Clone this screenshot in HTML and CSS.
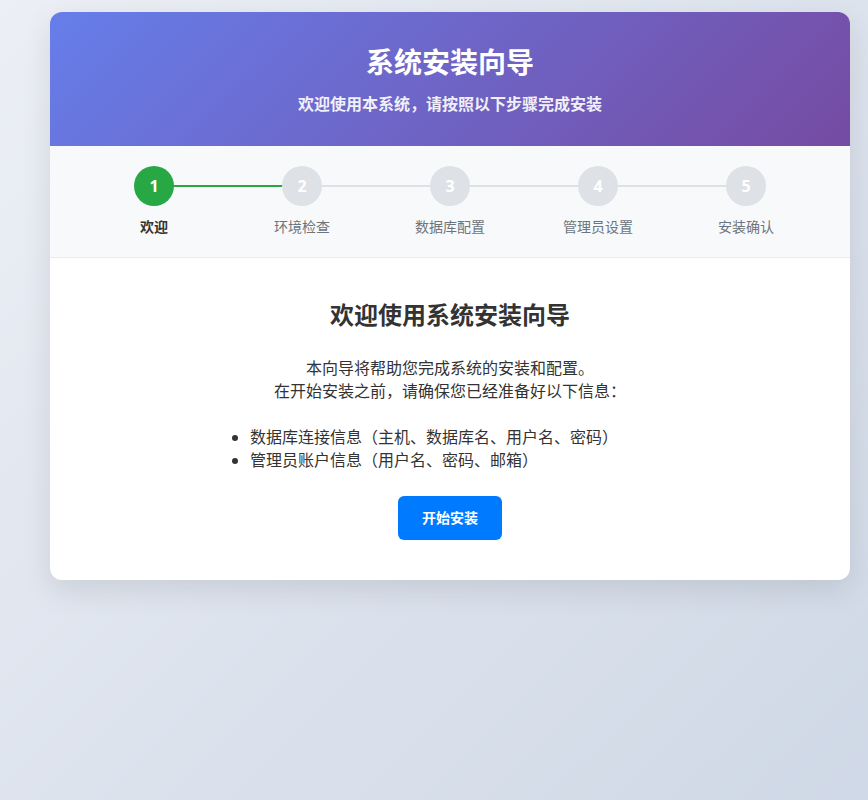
FILE: index.html
```html
<!DOCTYPE html>
<html lang="zh-CN">

<head>
  <meta charset="UTF-8">
  <title>系统安装向导</title>
  <link rel="stylesheet" href="styles.css">
</head>

<body>
  <div class="wizard">
    <div class="wizard-header">
      <h1>系统安装向导</h1>
      <p>欢迎使用本系统，请按照以下步骤完成安装</p>
    </div>

    <div class="steps">
      <div class="step active">
        <div class="step-circle">1</div>
        <div class="step-label">欢迎</div>
      </div>
      <div class="step">
        <div class="step-circle">2</div>
        <div class="step-label">环境检查</div>
      </div>
      <div class="step">
        <div class="step-circle">3</div>
        <div class="step-label">数据库配置</div>
      </div>
      <div class="step">
        <div class="step-circle">4</div>
        <div class="step-label">管理员设置</div>
      </div>
      <div class="step">
        <div class="step-circle">5</div>
        <div class="step-label">安装确认</div>
      </div>
    </div>

    <div class="wizard-content">
      <h2>欢迎使用系统安装向导</h2>
      <p>本向导将帮助您完成系统的安装和配置。<br>在开始安装之前，请确保您已经准备好以下信息：</p>
      <ul class="info-list">
        <li>数据库连接信息（主机、数据库名、用户名、密码）</li>
        <li>管理员账户信息（用户名、密码、邮箱）</li>
      </ul>
      <div class="actions">
        <button type="button" class="btn-primary">开始安装</button>
      </div>
    </div>
  </div>
</body>

</html>
```

FILE: styles.css
```css
* {
  box-sizing: border-box;
}

body {
  margin: 0;
  padding: 12px 50px;
  min-height: 100vh;
  font-family: "Noto Sans", "Noto Sans CJK SC", sans-serif;
  color: #333;
  background: linear-gradient(135deg, #eceff5 0%, #cfd8e6 100%);
}

.wizard {
  width: 800px;
  background: #fff;
  border-radius: 12px;
  box-shadow: 0 10px 30px rgba(0, 0, 0, 0.1);
  overflow: hidden;
}

.wizard-header {
  padding: 30px;
  text-align: center;
  color: #fff;
  background: linear-gradient(135deg, #667eea 0%, #764ba2 100%);
}

.wizard-header h1 {
  margin: 0 0 10px;
  font-size: 28px;
  line-height: 40px;
}

.wizard-header p {
  margin: 0;
  font-size: 16px;
  font-weight: bold;
  line-height: 24px;
  opacity: 0.9;
}

/* 步骤条 */
.steps {
  display: flex;
  padding: 20px 30px;
  background: #f8f9fa;
  border-bottom: 1px solid #e9ecef;
}

.step {
  flex: 1;
  position: relative;
  display: flex;
  flex-direction: column;
  align-items: center;
}

.step:not(:last-child)::after {
  content: "";
  position: absolute;
  top: 19px;
  left: 50%;
  width: 100%;
  height: 2px;
  background: #dee2e6;
}

.step.active::after {
  background: #28a745 !important;
}

.step-circle {
  position: relative;
  z-index: 1;
  width: 40px;
  height: 40px;
  border-radius: 50%;
  background: #dee2e6;
  color: #fff;
  font-size: 16px;
  font-weight: bold;
  display: flex;
  align-items: center;
  justify-content: center;
}

.step.active .step-circle {
  background: #28a745;
}

.step-label {
  margin-top: 11px;
  font-size: 14px;
  line-height: 20px;
  color: #6c757d;
}

.step.active .step-label {
  color: #333;
  font-weight: bold;
}

/* 内容 */
.wizard-content {
  padding: 40px;
  text-align: center;
}

.wizard-content h2 {
  margin: 0 0 25px;
  font-size: 24px;
  line-height: 34px;
}

.wizard-content p {
  margin: 0;
  font-size: 16px;
  line-height: 23px;
}

.info-list {
  max-width: 400px;
  margin: 23px auto 24px;
  padding: 0;
  text-align: left;
  font-size: 16px;
  line-height: 23px;
}

.btn-primary {
  padding: 12px 24px;
  border: none;
  border-radius: 6px;
  background: #007bff;
  color: #fff;
  font-family: inherit;
  font-size: 14px;
  font-weight: bold;
  line-height: 20px;
  cursor: pointer;
}
```
